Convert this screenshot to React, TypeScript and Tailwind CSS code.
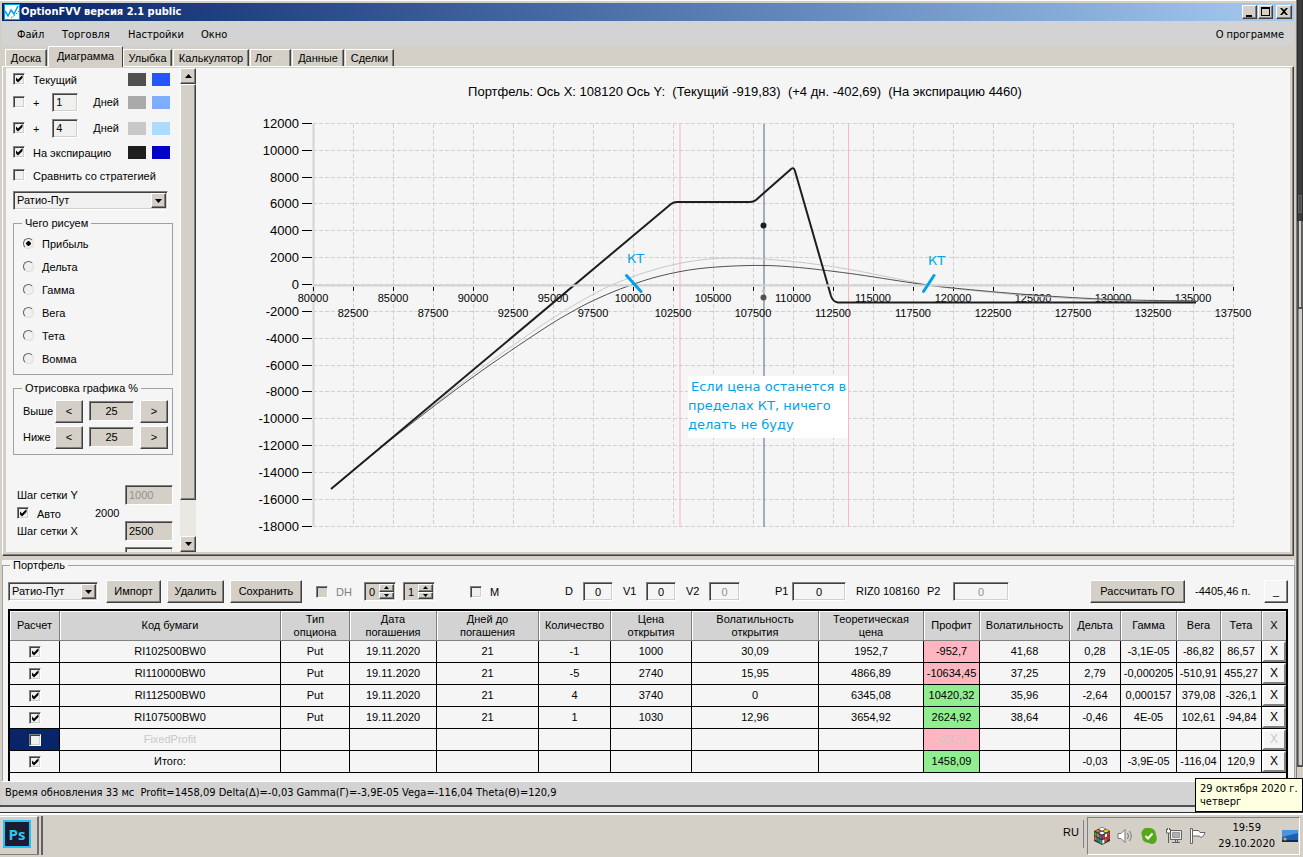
import React, { useState } from "react";

const raised =
  "border border-t-white border-l-white border-r-[#404040] border-b-[#404040] shadow-[inset_-1px_-1px_0_#808080]";
const sunken =
  "border border-t-[#808080] border-l-[#808080] border-r-white border-b-white shadow-[inset_1px_1px_0_#404040,inset_-1px_-1px_0_#d4d0c8]";

function Check({
  label,
  checked = false,
  disabled = false,
  id,
}: {
  label: string;
  checked?: boolean;
  disabled?: boolean;
  id?: string;
}) {
  const [on, setOn] = useState(checked);
  return (
    <span className="relative block size-3 shrink-0">
      <input
        id={id}
        type="checkbox"
        aria-label={label}
        checked={on}
        disabled={disabled}
        onChange={() => setOn(!on)}
        className={`block size-3 appearance-none ${disabled ? "bg-[#d4d0c8]" : "bg-[#f0f0f0]"} ${sunken}`}
      />
      {on && (
        <svg viewBox="0 0 12 12" className="pointer-events-none absolute inset-0 size-3">
          <path d="M3 4.5v3l2 2 4.500-4.500V2L5 6.500z" fill="#000" />
        </svg>
      )}
    </span>
  );
}

function Radio({ label, checked }: { label: string; checked: boolean }) {
  return (
    <label className="flex h-[23px] items-center gap-2 pl-[9px]">
      <input
        type="radio"
        name="quantity"
        defaultChecked={checked}
        className="size-[11px] appearance-none rounded-full border border-t-[#606060] border-l-[#606060] border-r-[#e0ddd6] border-b-[#e0ddd6] bg-[#f0f0f0] checked:bg-[radial-gradient(circle,#000_0_2px,#f0f0f0_2.5px)]"
      />
      <span className="pt-0.5">{label}</span>
    </label>
  );
}

function Combo({ label, className }: { label: string; className: string }) {
  return (
    <span className={`relative block h-[19px] ${className}`}>
      <select
        aria-label={label}
        className={`block h-full w-full appearance-none bg-[#f0f0f0] pl-[3px] text-[11px] ${sunken}`}
      >
        <option>Ратио-Пут</option>
      </select>
      <span
        className={`pointer-events-none absolute top-0.5 right-0.5 flex h-[15px] w-[15px] items-center justify-center bg-[#d4d0c8] ${raised}`}
      >
        <svg viewBox="0 0 7 4" className="h-1 w-[7px]">
          <path d="M0 0h7L3.500 4z" fill="#000" />
        </svg>
      </span>
    </span>
  );
}

function Box({
  label,
  value,
  className,
  disabled = false,
}: {
  label: string;
  value: string;
  className: string;
  disabled?: boolean;
}) {
  return (
    <input
      aria-label={label}
      defaultValue={value}
      disabled={disabled}
      className={`block shrink-0 px-[3px] text-[11px] disabled:text-[#909090] ${sunken} ${className}`}
    />
  );
}

function Btn({ children, className }: { children: React.ReactNode; className: string }) {
  return (
    <button type="button" className={`shrink-0 ${raised} ${className}`}>
      {children}
    </button>
  );
}

function Swatch({ color }: { color: string }) {
  return <span className="h-[13px] w-[18px]" style={{ backgroundColor: color }} />;
}

const legends = [
  { name: "Текущий", on: true, colors: ["#505050", "#2854ff"], row: "h-5" },
  { name: "+", days: "1", on: false, colors: ["#aaaaaa", "#7eacff"], row: "h-[26px]" },
  { name: "+", days: "4", on: true, colors: ["#c8c8c8", "#aadcff"], row: "h-[26px]" },
  { name: "На экспирацию", on: true, colors: ["#1e1e1e", "#0000c8"], row: "h-[22px]" },
];

function Sidebar() {
  return (
    <div className="w-[174px] shrink-0 overflow-hidden pt-px pl-[7px] text-[11px]">
      {legends.map((l, i) => (
        <div key={i} className={`flex items-center gap-1.5 pr-2.5 ${l.row}`}>
          <label className="flex flex-1 items-center gap-2">
            <Check label={l.name} checked={l.on} />
            <span className="pt-0.5 whitespace-nowrap">{l.name}</span>
          </label>
          {l.days && (
            <>
              <Box label="Дней" value={l.days} className="h-[19px] w-[26px] bg-[#f0f0f0]" />
              <span className="mr-[3px] ml-[9px]">Дней</span>
            </>
          )}
          {l.colors.map((c) => (
            <Swatch key={c} color={c} />
          ))}
        </div>
      ))}
      <label className="mb-1 flex h-6 items-center gap-2">
        <Check label="Сравнить со стратегией" />
        <span className="pt-0.5 whitespace-nowrap">Сравнить со стратегией</span>
      </label>
      <Combo label="Стратегия" className="w-[155px]" />
      <fieldset className="mt-1.5 w-[160px] border border-[#a0a0a0] pt-0.5 pb-1">
        <legend className="ml-2 px-[3px] leading-[14px]">Чего рисуем</legend>
        {["Прибыль", "Дельта", "Гамма", "Вега", "Тета", "Вомма"].map((t, i) => (
          <Radio key={t} label={t} checked={i === 0} />
        ))}
      </fieldset>
      <fieldset className="mt-1.5 w-[160px] border border-[#a0a0a0] pt-[3px] pb-1">
        <legend className="ml-2 px-[3px] leading-[14px]">Отрисовка графика %</legend>
        {["Выше", "Ниже"].map((t) => (
          <div key={t} className="flex h-[26px] items-center pr-1 pl-[9px]">
            <span className="w-8">{t}</span>
            <Btn className="h-[23px] w-7 bg-[#d4d0c8]">&lt;</Btn>
            <Box label={t} value="25" className="mx-1.5 h-5 w-[45px] bg-[#d4d0c8] text-center" />
            <Btn className="h-[23px] w-7 bg-[#d4d0c8]">&gt;</Btn>
          </div>
        ))}
      </fieldset>
      <div className="mt-[30px] pr-[7px] pl-1">
        <div className="flex h-5 items-center justify-between">
          <span>Шаг сетки Y</span>
          <Box label="Шаг сетки Y" value="1000" disabled className="h-5 w-12 bg-[#d4d0c8]" />
        </div>
        <div className="flex h-4 items-center">
          <label className="flex w-[78px] items-center gap-2">
            <Check label="Авто" checked />
            <span className="pt-0.5">Авто</span>
          </label>
          <span>2000</span>
        </div>
        <div className="flex h-5 items-center justify-between">
          <span>Шаг сетки X</span>
          <Box label="Шаг сетки X" value="2500" className="h-5 w-12 bg-[#d4d0c8]" />
        </div>
        <div className="mt-1.5 flex justify-end">
          <Box label="Точность" value="" className="h-5 w-12 bg-[#f0f0f0]" />
        </div>
      </div>
    </div>
  );
}

function ScrollBar() {
  return (
    <div className="flex w-4 shrink-0 flex-col bg-[#ebe8e3]">
      <Btn className="flex h-4 items-center justify-center bg-[#d4d0c8]">
        <svg viewBox="0 0 7 4" className="h-1 w-[7px]">
          <path d="M0 4h7L3.500 0z" />
        </svg>
      </Btn>
      <div className={`h-[416px] bg-[#d4d0c8] ${raised}`} />
      <div className="flex-1" />
      <Btn className="flex h-4 items-center justify-center bg-[#d4d0c8]">
        <svg viewBox="0 0 7 4" className="h-1 w-[7px]">
          <path d="M0 0h7L3.500 4z" />
        </svg>
      </Btn>
    </div>
  );
}

type Pt = [number, number];

function smooth(p: Pt[]) {
  let d = `M${p[0][0]} ${p[0][1]}`;
  for (let i = 0; i < p.length - 1; i++) {
    const a = p[Math.max(i - 1, 0)];
    const b = p[i];
    const c = p[i + 1];
    const e = p[Math.min(i + 2, p.length - 1)];
    d += `C${b[0] + (c[0] - a[0]) / 6} ${b[1] + (c[1] - a[1]) / 6} ${c[0] - (e[0] - b[0]) / 6} ${c[1] - (e[1] - b[1]) / 6} ${c[0]} ${c[1]}`;
  }
  return d;
}

const current: Pt[] = [
  [331, 489], [400, 432.5], [473, 377], [541, 330.5], [575, 310], [600, 297.5], [627, 286.5], [660, 276], [700, 268.5],
  [750, 265.5], [793, 267], [850, 273.5], [913, 283], [953, 288], [1033, 295], [1113, 299.5], [1196, 301],
];
const plus4: Pt[] = [
  [331, 489], [400, 432], [473, 374.5], [535, 330], [565, 310.5], [593, 294.5], [620, 281.5], [660, 268], [700, 260],
  [740, 258], [793, 261.5], [850, 269.5], [913, 282], [953, 288.5], [1033, 296], [1113, 300.5], [1196, 301.5],
];

const xOf = (v: number) => 313 + ((v - 80000) * 16) / 1000;
const yOf = (v: number) => Math.round(285 - (v * 13.42) / 1000) - 0.5;
const xs = Array.from({ length: 24 }, (_, i) => 80000 + i * 2500);
const ys = Array.from({ length: 16 }, (_, i) => 12000 - i * 2000);

function Chart() {
  return (
    <svg viewBox="196 68 1094 484" className="block h-full min-w-0 flex-1" role="img" aria-label="Диаграмма портфеля">
      <g stroke="#d0d0d0" strokeDasharray="4 2">
        {xs.map((v) => (
          <line key={v} x1={xOf(v) + 0.5} x2={xOf(v) + 0.5} y1="124" y2="527" />
        ))}
        {ys.map((v) => (
          <line key={v} x1="313" x2="1234" y1={yOf(v)} y2={yOf(v)} />
        ))}
      </g>
      <path d="M313.500 124V527" stroke="#d3d3d3" strokeWidth="2" />
      <path d="M680 124V527" stroke="#ffb6c1" strokeWidth="2" opacity=".55" />
      <path d="M848.500 124V527" stroke="#ffb6c1" />
      <path d="M764 124V527" stroke="#708090" strokeWidth="2" opacity=".6" />
      <g stroke="#000">
        {ys.map((v) => (
          <line key={v} x1="302" x2="312" y1={yOf(v)} y2={yOf(v)} />
        ))}
        {xs.map((v) => (
          <line key={v} x1={xOf(v) + 0.5} x2={xOf(v) + 0.5} y1="287" y2="291" />
        ))}
      </g>
      <g fontFamily="Liberation Sans, Arial, sans-serif" fill="#000">
        <g fontSize="13" textAnchor="end">
          {ys.map((v) => (
            <text key={v} x="299" y={yOf(v) + 4}>
              {v}
            </text>
          ))}
        </g>
        <g fontSize="11" textAnchor="middle">
          {xs.map((v, i) => (
            <text key={v} x={xOf(v)} y={i % 2 ? 317 : 302}>
              {v}
            </text>
          ))}
        </g>
        <text x="745" y="96" fontSize="13" textAnchor="middle" xmlSpace="preserve">
          {"Портфель: Ось X: 108120 Ось Y:\u00a0 (Текущий -919,83)\u00a0 (+4 дн. -402,69)\u00a0 (На экспирацию 4460)"}
        </text>
      </g>
      <path d={smooth(plus4)} fill="none" stroke="#c8c8c8" />
      <path d={smooth(current)} fill="none" stroke="#505050" />
      <path
        d="M331 489L671 204Q673.500 202 677 202H750Q753.500 202 756 200L790 170Q793.500 166 795 171L831 296Q833 302 838 302.500H1196"
        fill="none"
        stroke="#1e1e1e"
        strokeWidth="2"
        strokeLinejoin="round"
      />
      <path d="M313 285.500H1234" stroke="#d3d3d3" strokeWidth="2" />
      <circle cx="763.5" cy="225.5" r="3" fill="#1e1e1e" />
      <circle cx="763.5" cy="291" r="2" fill="#c8c8c8" />
      <circle cx="763.5" cy="297.5" r="3" fill="#505050" />
      <path d="M626.500 275.500L641 291.500M934 275.500L923.500 291.500" stroke="#00a2e8" strokeWidth="3" strokeLinecap="round" />
      <rect x="688" y="376" width="160" height="62" fill="#fff" />
      <g fontFamily="DejaVu Sans, Verdana, sans-serif" fontSize="13" fill="#00a2e8">
        <text x="627" y="263">КТ</text>
        <text x="928" y="265">КТ</text>
        <text x="691" y="391">Если цена останется в</text>
        <text x="688" y="410">пределах КТ, ничего</text>
        <text x="688" y="429">делать не буду</text>
      </g>
    </svg>
  );
}

const columns: [string, string][] = [
  ["Расчет", "w-[50px]"],
  ["Код бумаги", "w-[221px]"],
  ["Тип\nопциона", "w-[69px]"],
  ["Дата\nпогашения", "w-[87px]"],
  ["Дней до\nпогашения", "w-[102px]"],
  ["Количество", "w-[72px]"],
  ["Цена\nоткрытия", "w-[81px]"],
  ["Волатильность\nоткрытия", "w-[127px]"],
  ["Теоретическая\nцена", "w-[105px]"],
  ["Профит", "w-[56px]"],
  ["Волатильность", "w-[90px]"],
  ["Дельта", "w-[51px]"],
  ["Гамма", "w-[56px]"],
  ["Вега", "w-[44px]"],
  ["Тета", "w-[41px]"],
  ["X", "w-[24px]"],
];

const rows = [
  ["RI102500BW0", "Put", "19.11.2020", "21", "-1", "1000", "30,09", "1952,7", "-952,7", "41,68", "0,28", "-3,1E-05", "-86,82", "86,57"],
  ["RI110000BW0", "Put", "19.11.2020", "21", "-5", "2740", "15,95", "4866,89", "-10634,45", "37,25", "2,79", "-0,000205", "-510,91", "455,27"],
  ["RI112500BW0", "Put", "19.11.2020", "21", "4", "3740", "0", "6345,08", "10420,32", "35,96", "-2,64", "0,000157", "379,08", "-326,1"],
  ["RI107500BW0", "Put", "19.11.2020", "21", "1", "1030", "12,96", "3654,92", "2624,92", "38,64", "-0,46", "4E-05", "102,61", "-94,84"],
  ["FixedProfit", "", "", "", "", "", "", "", "-2370", "", "", "", "", ""],
  ["Итого:", "", "", "", "", "", "", "", "1458,09", "", "-0,03", "-3,9E-05", "-116,04", "120,9"],
];

function Positions() {
  return (
    <div className="mr-1.5 ml-[5px] border-2 border-b-0 border-black pb-2">
      <table className="w-full table-fixed border-separate border-spacing-0 text-[11px]">
        <thead>
          <tr className="h-[30px]">
            {columns.map(([t, w]) => (
              <th
                key={t}
                className={`border-r border-b border-[#808080] bg-[#d3d3d3] p-0 text-center leading-[13px] font-normal whitespace-pre-line shadow-[inset_1px_1px_0_#fff] last:border-r-0 ${w}`}
              >
                {t}
              </th>
            ))}
          </tr>
        </thead>
        <tbody>
          {rows.map((r) => {
            const fixed = r[0] === "FixedProfit";
            return (
              <tr key={r[0]} className={`h-[22px] ${fixed ? "text-[#c8c8c8]" : ""}`}>
                <td className={`border-r border-b border-black p-0 ${fixed ? "bg-[#0a246a]" : ""}`}>
                  <div className="flex justify-center">
                    <Check label={r[0]} checked={!fixed} />
                  </div>
                </td>
                {r.map((c, i) => (
                  <td
                    key={i}
                    className={`border-r border-b border-black p-0 text-center whitespace-nowrap ${
                      i === 8 ? (c.startsWith("-") ? "bg-[#ffb6c1]" : "bg-[#90ee90]") : ""
                    }`}
                  >
                    {c}
                  </td>
                ))}
                <td className="border-b border-black p-0">
                  <button
                    type="button"
                    className="block h-[21px] w-full border-2 border-t-white border-r-[#808080] border-b-[#808080] border-l-white text-[12px] leading-[17px]"
                  >
                    X
                  </button>
                </td>
              </tr>
            );
          })}
        </tbody>
      </table>
    </div>
  );
}

function Spin({ label, value, className }: { label: string; value: string; className: string }) {
  return (
    <span className={`flex h-[19px] w-8 shrink-0 bg-[#d4d0c8] p-px ${sunken} ${className}`}>
      <input aria-label={label} defaultValue={value} className="w-3 min-w-0 flex-1 pl-[3px] text-[11px] leading-none" />
      <span className="flex w-[15px] flex-col">
        <Btn className="flex flex-1 items-center justify-center">
          <svg viewBox="0 0 5 3" className="h-[3px] w-[5px]">
            <path d="M0 3h5L2.500 0z" />
          </svg>
        </Btn>
        <Btn className="flex flex-1 items-center justify-center">
          <svg viewBox="0 0 5 3" className="h-[3px] w-[5px]">
            <path d="M0 0h5L2.500 3z" />
          </svg>
        </Btn>
      </span>
    </span>
  );
}

function Toolbar() {
  return (
    <div className="flex h-[39px] items-center pt-1 pr-1.5 pl-[5px] text-[11px]">
      <Combo label="Портфель" className="w-[90px]" />
      <Btn className="ml-2 h-[23px] w-[55px] bg-[#d4d0c8]">Импорт</Btn>
      <Btn className="ml-1.5 h-[23px] w-[57px] bg-[#d4d0c8]">Удалить</Btn>
      <Btn className="ml-1.5 h-[23px] w-[72px] bg-[#d4d0c8]">Сохранить</Btn>
      <label className="ml-3.5 flex w-12 items-center gap-2 text-[#808080]">
        <Check label="DH" disabled />
        <span className="pt-0.5">DH</span>
      </label>
      <Spin label="DH 1" value="0" className="" />
      <Spin label="DH 2" value="1" className="ml-[7px]" />
      <label className="ml-[35px] flex w-[95px] items-center gap-2">
        <Check label="M" />
        <span className="pt-0.5">M</span>
      </label>
      <span className="w-[18px]">D</span>
      <Box label="D" value="0" className="h-[19px] w-[30px] text-center" />
      <span className="ml-2.5 w-[23px]">V1</span>
      <Box label="V1" value="0" className="h-[19px] w-[30px] text-center" />
      <span className="ml-2.5 w-[23px]">V2</span>
      <Box label="V2" value="0" disabled className="h-[19px] w-[31px] text-center" />
      <span className="ml-[35px] w-[17px]">P1</span>
      <Box label="P1" value="0" className="h-[19px] w-[54px] text-center" />
      <span className="ml-2.5 w-[71px] whitespace-nowrap">RIZ0 108160</span>
      <span className="w-[26px]">P2</span>
      <Box label="P2" value="0" disabled className="h-[19px] w-14 text-center" />
      <Btn className="ml-auto h-[23px] w-[95px] bg-[#d4d0c8]">Рассчитать ГО</Btn>
      <span className="ml-2.5 w-[69px] whitespace-nowrap">-4405,46 п.</span>
      <Btn className="h-[23px] w-6">_</Btn>
    </div>
  );
}

function TitleBar() {
  return (
    <div className="flex h-[18px] items-center gap-px bg-linear-to-r from-[#0a246a] to-[#a6caf0] pr-0.5 pl-0.5">
      <svg viewBox="0 0 16 16" className="size-4">
        <rect width="16" height="16" fill="#00a2e8" />
        <rect x="1" y="1" width="14" height="14" fill="#fff" />
        <path d="M1 7l3 5 3-6 3 4 4-8" fill="none" stroke="#00a2e8" strokeWidth="1.5" />
        <path d="M7 14l4-3 4-4" fill="none" stroke="#00a2e8" strokeDasharray="2 1" />
      </svg>
      <h1 className="flex-1 font-['DejaVu_Sans_Condensed','DejaVu_Sans',sans-serif] text-[11px] font-bold text-white">
        OptionFVV версия 2.1 public
      </h1>
      {["M3 9h6v2H3z", "M2 1h9v9H2zM3 3v6h7V3z", "M3 2h2l2 2 2-2h2L8 5.500 11 9H9L7 7 5 9H3l3-3.500z"].map((d, i) => (
        <button
          key={d}
          type="button"
          aria-label={["Свернуть", "Развернуть", "Закрыть"][i]}
          className={`h-3.5 bg-[#d4d0c8] ${raised} ${i === 2 ? "ml-0.5 w-4" : "w-[15px]"}`}
        >
          <svg viewBox="0 0 13 12" className="h-3 w-[13px]">
            <path d={d} fillRule="evenodd" />
          </svg>
        </button>
      ))}
    </div>
  );
}

const tabs: [string, string][] = [
  ["Доска", "w-[42px]"],
  ["Диаграмма", "w-[75px]"],
  ["Улыбка", "w-[49px]"],
  ["Калькулятор", "w-[76px]"],
  ["Лог", "w-[41px]"],
  ["Данные", "w-[52px]"],
  ["Сделки", "w-[49px]"],
];

function Tray() {
  return (
    <footer className="flex h-[45px] items-stretch border-t border-[#303030] bg-[#d4d0c8] pr-[3px] pb-0.5 shadow-[inset_0_2px_0_#fff]">
      <button
        type="button"
        aria-label="Photoshop"
        className="mt-[3px] flex w-[39px] items-center border-t border-r-2 border-b border-t-white border-r-[#707070] border-b-[#808080] pb-1 pl-[3px]"
      >
        <svg viewBox="0 0 28 28" className="size-7">
          <rect width="28" height="28" fill="#22c3f8" />
          <rect x="2" y="2" width="24" height="24" fill="#1d1b30" />
          <text x="14" y="19.500" fontSize="15" fontWeight="bold" textAnchor="middle" fill="#31c5f4" fontFamily="Open Sans, sans-serif">
            Ps
          </text>
        </svg>
      </button>
      <span className="mt-[3px] ml-0.5 w-0.5 border-l-2 border-[#606060]" />
      <div className="flex-1" />
      <span className="my-[7px] flex items-center border-r border-[#808080] pr-1 pb-1 text-[11px]">RU</span>
      <div className="mt-1 ml-[3px] flex w-[213px] items-center border border-t-[#808080] border-r-white border-b-white border-l-[#808080] pl-[5px]">
        <svg viewBox="0 0 18 18" className="size-[18px]">
          <path d="M9 0l8 4v10l-8 4-8-4V4z" fill="#333" />
          <path d="M9 .5l3.200 1.600L9 3.700 5.800 2.100z" fill="#fff" />
          <path d="M5 2.500l3 1.500-3 1.500-3-1.500z" fill="#e8641b" />
          <path d="M13 2.500L16 4l-3 1.500L10 4z" fill="#ffd21f" />
          <path d="M9 4.500l3 1.500-3 1.500L6 6z" fill="#fff" />
          <path d="M1.400 5l2.200 1.100v3.300L1.400 8.300zM6.500 12.200l2.200 1.100v3.700l-2.200-1.100z" fill="#2fae4a" />
          <path d="M4 6.300l2.200 1.100v3.300L4 9.600zM1.400 9.300l2.200 1.100v3.300l-2.200-1.100z" fill="#ee6d20" />
          <path d="M6.500 7.600l2.200 1.100V12l-2.200-1.100zM4 10.700l2.200 1.100v3.300L4 14z" fill="#2a74e0" />
          <path d="M9.300 8.700l2.200-1.100v3.300L9.300 12zM14.400 9.300l2.200-1.100v3.800l-2.200 1.100z" fill="#e22b2b" />
          <path d="M11.900 7.400l2.200-1.100v3.300l-2.200 1.100zM9.300 13.300l2.200-1.100v3.600L9.300 17z" fill="#f8f8f8" />
          <path d="M14.400 6.100L16.600 5v2.800l-2.200 1.100zM11.900 11.500l2.200-1.100V14l-2.200 1.200z" fill="#e23a2b" />
        </svg>
        <svg viewBox="0 0 16 16" className="ml-1.5 size-4" fill="none" stroke="#777">
          <path d="M1 5.500h3l4-4v13l-4-4H1z" fill="#fff" />
          <path d="M10.500 5q2 3 0 6M12.500 3q3.500 5 0 10" />
        </svg>
        <svg viewBox="0 0 16 16" className="ml-2 size-4">
          <path d="M4 0h5q6 1 6 7 2 5-1 8-3 2-6 0-7 0-7-7-2-5 3-8z" fill="#57a818" />
          <path d="M4.500 8l2.500 2.500 4.500-5" fill="none" stroke="#fff" strokeWidth="2" />
        </svg>
        <svg viewBox="0 0 17 16" className="ml-2 h-4 w-[17px]" fill="none" stroke="#606060">
          <path d="M5.500 2.500h11v9h-11z" fill="#eee" />
          <path d="M7.500 4.500h7v5h-7z" fill="#b0b0b0" stroke="#999" />
          <path d="M7 14.500h8M10.500 12v2M12.500 12v2" />
          <path d="M1.500 1v4h4V1M3.500 5v10M2.500 0v2M4.500 0v2" fill="#fff" />
        </svg>
        <svg viewBox="0 0 17 16" className="ml-[7px] h-4 w-[17px]" fill="#fff" stroke="#666">
          <path d="M1.500.5v15h2V.5z" />
          <path d="M3.500 2.500h6l1.500 2h5q-1 4-4 5l-2-1.500H3.500z" />
        </svg>
        <div className="ml-auto text-center font-['DejaVu_Sans_Condensed','DejaVu_Sans',sans-serif] text-[11px] leading-4">
          19:59
          <br />
          29.10.2020
        </div>
        <svg viewBox="0 0 16 14" className="mr-px ml-[7px] h-3.5 w-4">
          <path d="M0 1h16v10H0z" fill="#1b5fb4" />
          <path d="M0 1h16v3L0 8z" fill="#4b95e0" />
          <path d="M0 11h16v2H0z" fill="#102c55" />
          <circle cx="3" cy="10" r="1.500" fill="#f5a623" />
        </svg>
      </div>
    </footer>
  );
}

export default function App() {
  return (
    <div className="relative flex h-screen min-h-[700px] flex-col overflow-hidden bg-[#e6e6e6] font-['Liberation_Sans',Arial,sans-serif] text-black">
      <div className="flex min-h-0 flex-1">
        <main className="mb-[5px] flex min-w-0 flex-1 flex-col border-r border-b-2 border-r-[#808080] border-b-[#505050] bg-[#d4d0c8] pt-[3px] pr-0.5 pl-0.5 shadow-[inset_0_1px_0_#fff]">
          <TitleBar />
          <nav className="flex h-[25px] items-center bg-[#d3d3d3] pt-[3px] pr-2.5 pl-[15px] font-['DejaVu_Sans_Condensed','DejaVu_Sans',sans-serif] text-[11px]">
            <button type="button" className="w-[45px] text-left">Файл</button>
            <button type="button" className="w-[66px] text-left">Торговля</button>
            <button type="button" className="w-[73px] text-left">Настройки</button>
            <button type="button">Окно</button>
            <button type="button" className="ml-auto">О программе</button>
          </nav>
          <div role="tablist" className="flex h-5 items-end pl-[3px] text-[11px]">
            {tabs.map(([t, w], i) => (
              <button
                key={t}
                type="button"
                role="tab"
                aria-selected={i === 1}
                className={`border-t border-r border-l border-t-white border-r-[#404040] border-l-white whitespace-nowrap ${w} ${
                  i === 1 ? "relative -mb-px h-[21px] bg-[#d4d0c8] pb-0.5" : "mr-px h-[17px] shadow-[inset_-1px_0_0_#808080]"
                } ${t === "Лог" ? "pl-1 text-left" : ""}`}
              >
                {t}
              </button>
            ))}
          </div>
          <section className="flex min-h-0 flex-1 border border-t-white border-r-[#404040] border-b-[#404040] border-l-white bg-[#f5f5f5] shadow-[inset_-1px_-1px_0_#808080]">
            <div className="mr-px mb-px flex min-w-0 flex-1 border-t border-r-2 border-b-2 border-l-3 border-[#d4d0c8]">
              <Sidebar />
              <ScrollBar />
              <Chart />
            </div>
          </section>
          <section className="mt-1 bg-[#f5f5f5]">
            <fieldset className="border border-b-0 border-[#a0a0a0]">
              <legend className="ml-[7px] px-[3px] text-[11px] leading-[10px]">Портфель</legend>
              <Toolbar />
              <Positions />
            </fieldset>
          </section>
          <div className="flex h-6 items-center border-t border-white bg-[#d3d3d3] pl-[3px] font-['DejaVu_Sans_Condensed','DejaVu_Sans',sans-serif] text-[11px] whitespace-pre">
            {"Время обновления 33 мс  Profit=1458,09 Delta(Δ)=-0,03 Gamma(Γ)=-3,9E-05 Vega=-116,04 Theta(Θ)=120,9"}
          </div>
        </main>
        <div className="flex w-1.5 flex-col">
          <div className="flex h-[221px] flex-col justify-end border-x border-[#2c2c2c] bg-[#3c3c3c]">
            <div className="mb-2 h-[18px] border border-[#606060] bg-[#505050]" />
          </div>
          <div className="h-[86px] border-x-2 border-l-[#505050] border-r-[#606060] bg-[#d4d0c8]" />
          <div className="h-[460px] border-x border-y-2 border-[#505050] bg-[#d4d0c8] shadow-[inset_1px_0_0_#808080]" />
          <div className="flex-1 bg-[#d4d0c8]" />
        </div>
      </div>
      <Tray />
      <div
        role="tooltip"
        className="absolute right-0 bottom-[45px] h-[34px] w-[108px] border border-black bg-[#ffffe1] pt-[3px] pl-1 font-['DejaVu_Sans_Condensed','DejaVu_Sans',sans-serif] text-[11px] leading-[13px] whitespace-nowrap"
      >
        29 октября 2020 г.
        <br />
        четверг
      </div>
    </div>
  );
}
